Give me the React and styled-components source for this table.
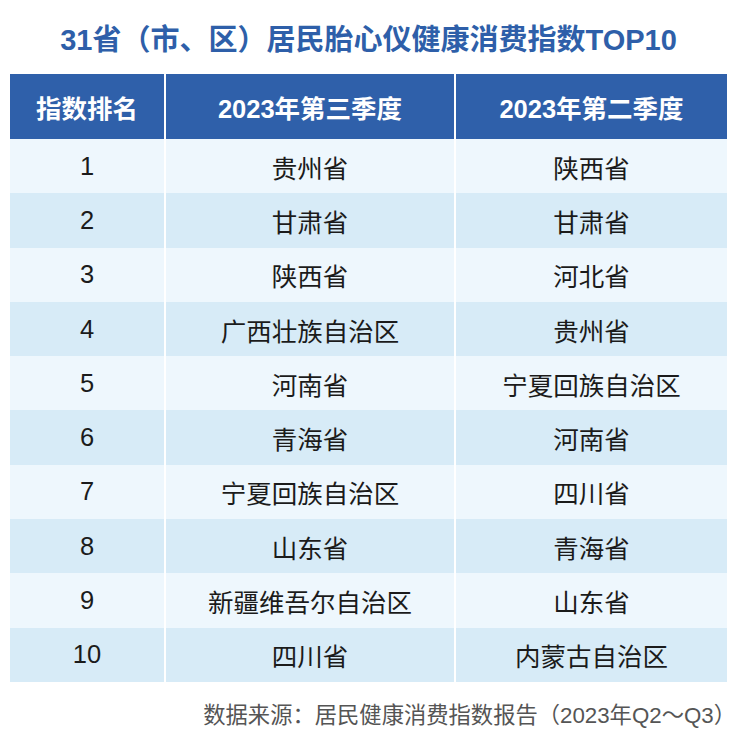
import React from 'react';
import styled, { createGlobalStyle } from 'styled-components';

const GlobalStyle = createGlobalStyle`
  body {
    margin: 0;
    background: #ffffff;
    font-family: "Liberation Sans", "Noto Sans CJK SC", sans-serif;
  }
`;

const Page = styled.div`
  width: 740px;
  height: 745px;
  padding: 0 13px 0 10px;
  box-sizing: border-box;
  display: flex;
  flex-direction: column;
`;

const Title = styled.h1`
  margin: 0;
  height: 74px;
  padding-top: 22px;
  box-sizing: border-box;
  text-align: center;
  font-size: 29px;
  line-height: 36px;
  font-weight: 700;
  color: #2e5fa9;
  white-space: nowrap;
`;

const Table = styled.div`
  display: grid;
  grid-template-columns: 154px 288px 271px;
  column-gap: 2px;
  width: 717px;
`;

const HeadCell = styled.div`
  height: 65px;
  background: #2f60aa;
  color: #ffffff;
  font-size: 25.5px;
  font-weight: 700;
  display: flex;
  align-items: center;
  justify-content: center;
`;

const Cell = styled.div`
  height: 54.3px;
  background: ${(p) => (p.$alt ? '#d7ebf7' : '#eef7fd')};
  color: #1b1b1b;
  font-size: 25.5px;
  display: flex;
  align-items: center;
  justify-content: center;
`;

const Source = styled.div`
  margin-top: 15px;
  width: 726px;
  text-align: right;
  font-size: 22.3px;
  color: #555555;
  white-space: nowrap;
`;

const rows = [
  ['1', '贵州省', '陕西省'],
  ['2', '甘肃省', '甘肃省'],
  ['3', '陕西省', '河北省'],
  ['4', '广西壮族自治区', '贵州省'],
  ['5', '河南省', '宁夏回族自治区'],
  ['6', '青海省', '河南省'],
  ['7', '宁夏回族自治区', '四川省'],
  ['8', '山东省', '青海省'],
  ['9', '新疆维吾尔自治区', '山东省'],
  ['10', '四川省', '内蒙古自治区'],
];

export default function App() {
  return (
    <Page>
      <GlobalStyle />
      <Title>31省（市、区）居民胎心仪健康消费指数TOP10</Title>
      <Table>
        <HeadCell>指数排名</HeadCell>
        <HeadCell>2023年第三季度</HeadCell>
        <HeadCell>2023年第二季度</HeadCell>
        {rows.map((row, i) =>
          row.map((text, j) => (
            <Cell key={`${i}-${j}`} $alt={i % 2 === 1}>
              {text}
            </Cell>
          ))
        )}
      </Table>
      <Source>数据来源：居民健康消费指数报告（2023年Q2～Q3）</Source>
    </Page>
  );
}
